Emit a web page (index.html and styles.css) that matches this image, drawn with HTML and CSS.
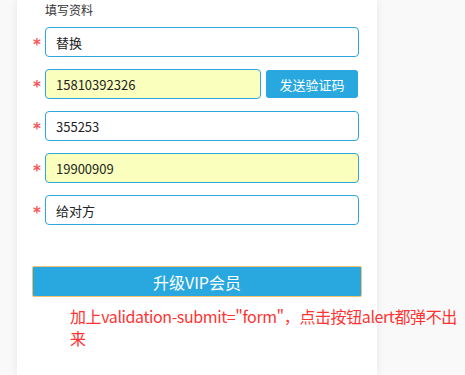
FILE: index.html
```html
<!DOCTYPE html>
<html lang="zh-CN">

<head>
    <meta charset="UTF-8">
    <meta name="viewport" content="width=device-width, initial-scale=1.0">
    <title>填写资料</title>
    <link rel="stylesheet" href="styles.css">
</head>

<body>
    <div class="panel">
        <p class="title">填写资料</p>

        <!-- vip form -->
        <form class="vip-form">
            <div class="row">
                <span class="star">*</span>
                <input type="text" value="替换">
            </div>
            <div class="row">
                <span class="star">*</span>
                <input class="filled short" type="text" value="15810392326">
                <button type="button" class="send-code">发送验证码</button>
            </div>
            <div class="row">
                <span class="star">*</span>
                <input type="text" value="355253">
            </div>
            <div class="row">
                <span class="star">*</span>
                <input class="filled" type="text" value="19900909">
            </div>
            <div class="row">
                <span class="star">*</span>
                <input type="text" value="给对方">
            </div>

            <!-- submit -->
            <button type="button" class="upgrade">升级VIP会员</button>
        </form>

        <p class="note">加上validation-submit="form"，点击按钮alert都弹不出来</p>
    </div>
</body>

</html>
```

FILE: styles.css
```css
body {
    background-color: #f9f9f9;
    font-family: "Noto Sans CJK SC", "Noto Sans", sans-serif;
    margin: 0;
}

.panel {
    background-color: #ffffff;
    width: 360px;
    min-height: 375px;
    margin-left: 17px;
    box-shadow: 0 0 8px 0 rgba(0, 0, 0, 0.08);
}

.title {
    margin: 0;
    padding-left: 28px;
    font-size: 12px;
    line-height: 20px;
    color: #333333;
}

.vip-form {
    padding-top: 7px;
}

.row {
    display: flex;
    align-items: center;
    height: 30px;
    margin-bottom: 12px;
    padding-right: 18px;
}

.star {
    width: 28px;
    padding-left: 12px;
    box-sizing: border-box;
    text-align: center;
    color: #f55555;
    font-family: "DejaVu Sans", sans-serif;
    font-weight: bold;
    font-size: 15px;
    line-height: 30px;
    padding-top: 6px;
}

input {
    flex: 1;
    height: 30px;
    box-sizing: border-box;
    border: 1px solid #2ea7df;
    border-radius: 4px;
    padding: 0 10px;
    font-family: "Noto Sans CJK SC", "Noto Sans", sans-serif;
    font-size: 13px;
    color: #222222;
    background-color: #ffffff;
    outline: none;
}

input.filled {
    background-color: #faffbd;
}

input.short {
    flex: none;
    width: 216px;
}

.send-code {
    width: 92px;
    height: 28px;
    margin-left: 5px;
    border: none;
    border-radius: 3px;
    background-color: #29a8e0;
    color: #ffffff;
    font-family: "Noto Sans CJK SC", "Noto Sans", sans-serif;
    font-size: 13px;
    padding: 0;
}

.upgrade {
    display: block;
    width: 330px;
    height: 31px;
    margin: 41px 0 0 15px;
    border: 1px solid #f0c36a;
    border-radius: 2px;
    background-color: #29a8e0;
    color: #ffffff;
    font-family: "Noto Sans CJK SC", "Noto Sans", sans-serif;
    font-size: 16px;
    padding: 0;
}

.note {
    width: 392px;
    margin: 8px 0 0 53px;
    font-size: 16px;
    line-height: 22px;
    letter-spacing: -0.4px;
    color: #ff3333;
}
```
